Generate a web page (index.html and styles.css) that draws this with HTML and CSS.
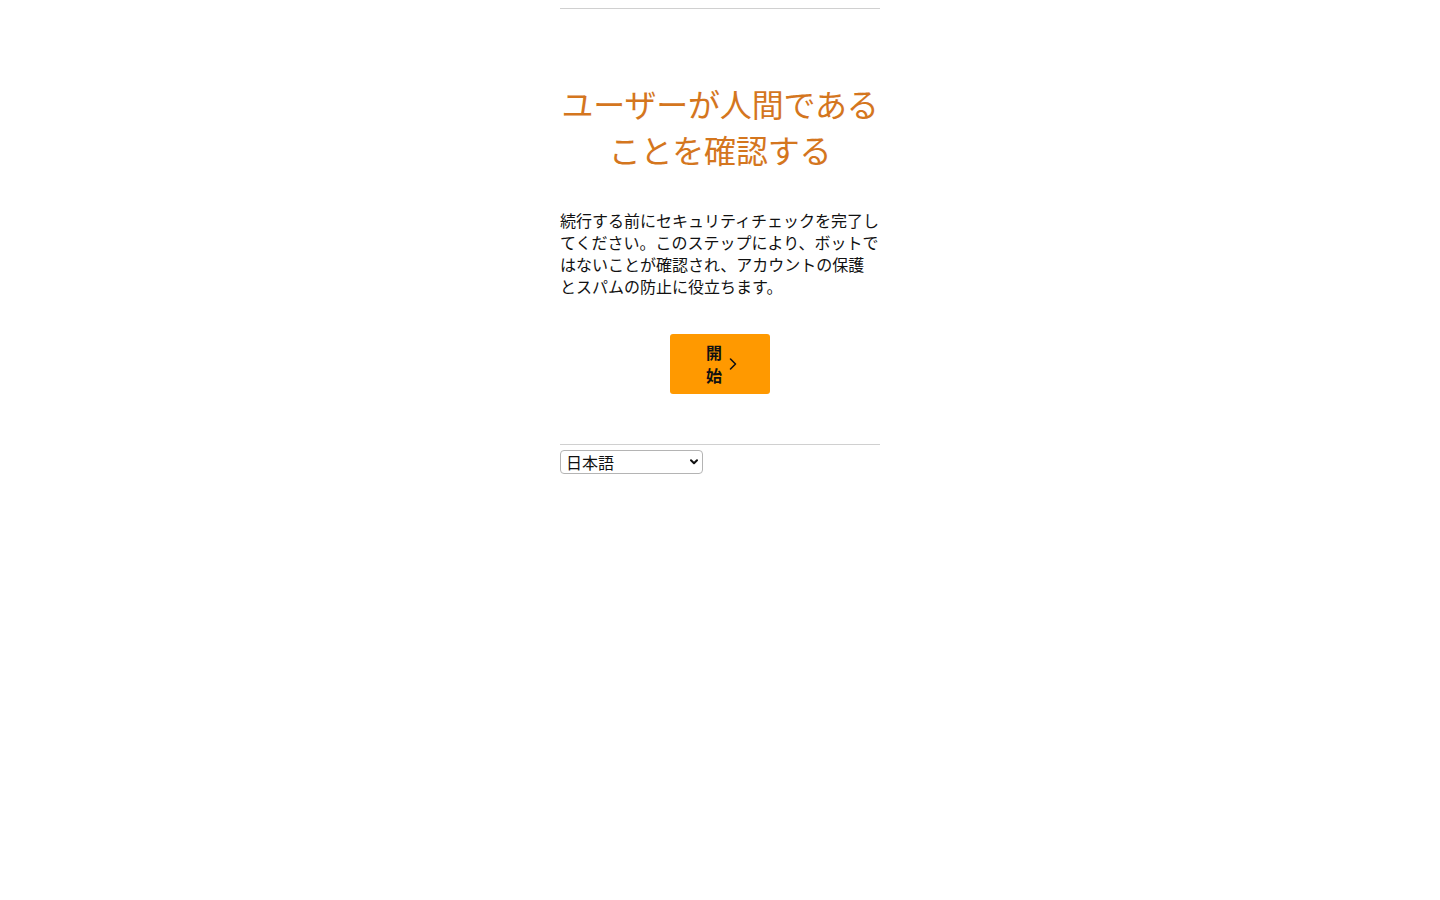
FILE: index.html
```html
<!DOCTYPE html>
<html lang="ja">
<head>
<meta charset="utf-8">
<title>ユーザーが人間であることを確認する</title>
<link rel="stylesheet" href="styles.css">
</head>
<body>
<main class="page">
  <hr class="rule">
  <h1 class="title">ユーザーが人間であることを確認する</h1>
  <p class="desc">続行する前にセキュリティチェックを完了してください。このステップにより、ボットではないことが確認され、アカウントの保護とスパムの防止に役立ちます。</p>
  <div class="actions">
    <button class="start" type="button">
      <span class="start-label">開始</span>
      <svg class="chev" width="10" height="16" viewBox="0 0 10 16" aria-hidden="true"><path d="M2.5 3 L7.5 8 L2.5 13" fill="none" stroke="#111" stroke-width="1.6" stroke-linecap="round" stroke-linejoin="round"/></svg>
    </button>
  </div>
  <hr class="rule rule-bottom">
  <div class="lang-wrap">
    <select class="lang">
      <option>日本語</option>
      <option>English</option>
    </select>
    <svg class="lang-arrow" width="8" height="6" viewBox="0 0 8 6" aria-hidden="true"><path d="M1 1.2 L4 4.2 L7 1.2" fill="none" stroke="#111" stroke-width="2" stroke-linecap="round" stroke-linejoin="round"/></svg>
  </div>
</main>
</body>
</html>
```
FILE: styles.css
```css
html, body {
  margin: 0;
  padding: 0;
  background: #fff;
}
body {
  font-family: "Noto Sans CJK JP", "Noto Sans", sans-serif;
  color: #111;
}
.page {
  width: 320px;
  margin: 0 auto;
  padding-top: 8px;
}
.rule {
  border: 0;
  border-top: 1px solid #d0d0d0;
  margin: 0;
  height: 0;
}
.title {
  margin: 71px 0 0;
  font-size: 32px;
  line-height: 46px;
  font-weight: 400;
  color: #d4761e;
  text-align: center;
  letter-spacing: -0.2px;
}
.desc {
  margin: 37px 0 0;
  font-size: 16px;
  line-height: 22px;
}
.actions {
  display: flex;
  justify-content: center;
  margin-top: 37px;
}
.start {
  width: 100px;
  height: 60px;
  background: #ff9900;
  border: 0;
  border-radius: 3px;
  display: flex;
  align-items: center;
  justify-content: center;
  gap: 6px;
  padding: 0 0 0 4px;
  font-family: "Noto Sans CJK JP", sans-serif;
  font-weight: 700;
  font-size: 16px;
  line-height: 23px;
  color: #111;
}
.start-label {
  width: 16px;
  display: block;
}
.chev {
  display: block;
}
.rule-bottom {
  margin-top: 50px;
}
.lang-wrap {
  position: relative;
  width: 143px;
  margin-top: 5px;
}
.lang {
  -webkit-appearance: none;
  appearance: none;
  display: block;
  box-sizing: border-box;
  width: 143px;
  height: 24px;
  margin: 0;
  font-family: "Noto Sans CJK JP", sans-serif;
  font-size: 16px;
  line-height: 22px;
  border: 1px solid #b4b4b4;
  border-radius: 4px;
  background: #fff;
  color: #111;
  padding: 0 20px 0 5px;
}
.lang-arrow {
  position: absolute;
  right: 5px;
  top: 9px;
  pointer-events: none;
}
```
